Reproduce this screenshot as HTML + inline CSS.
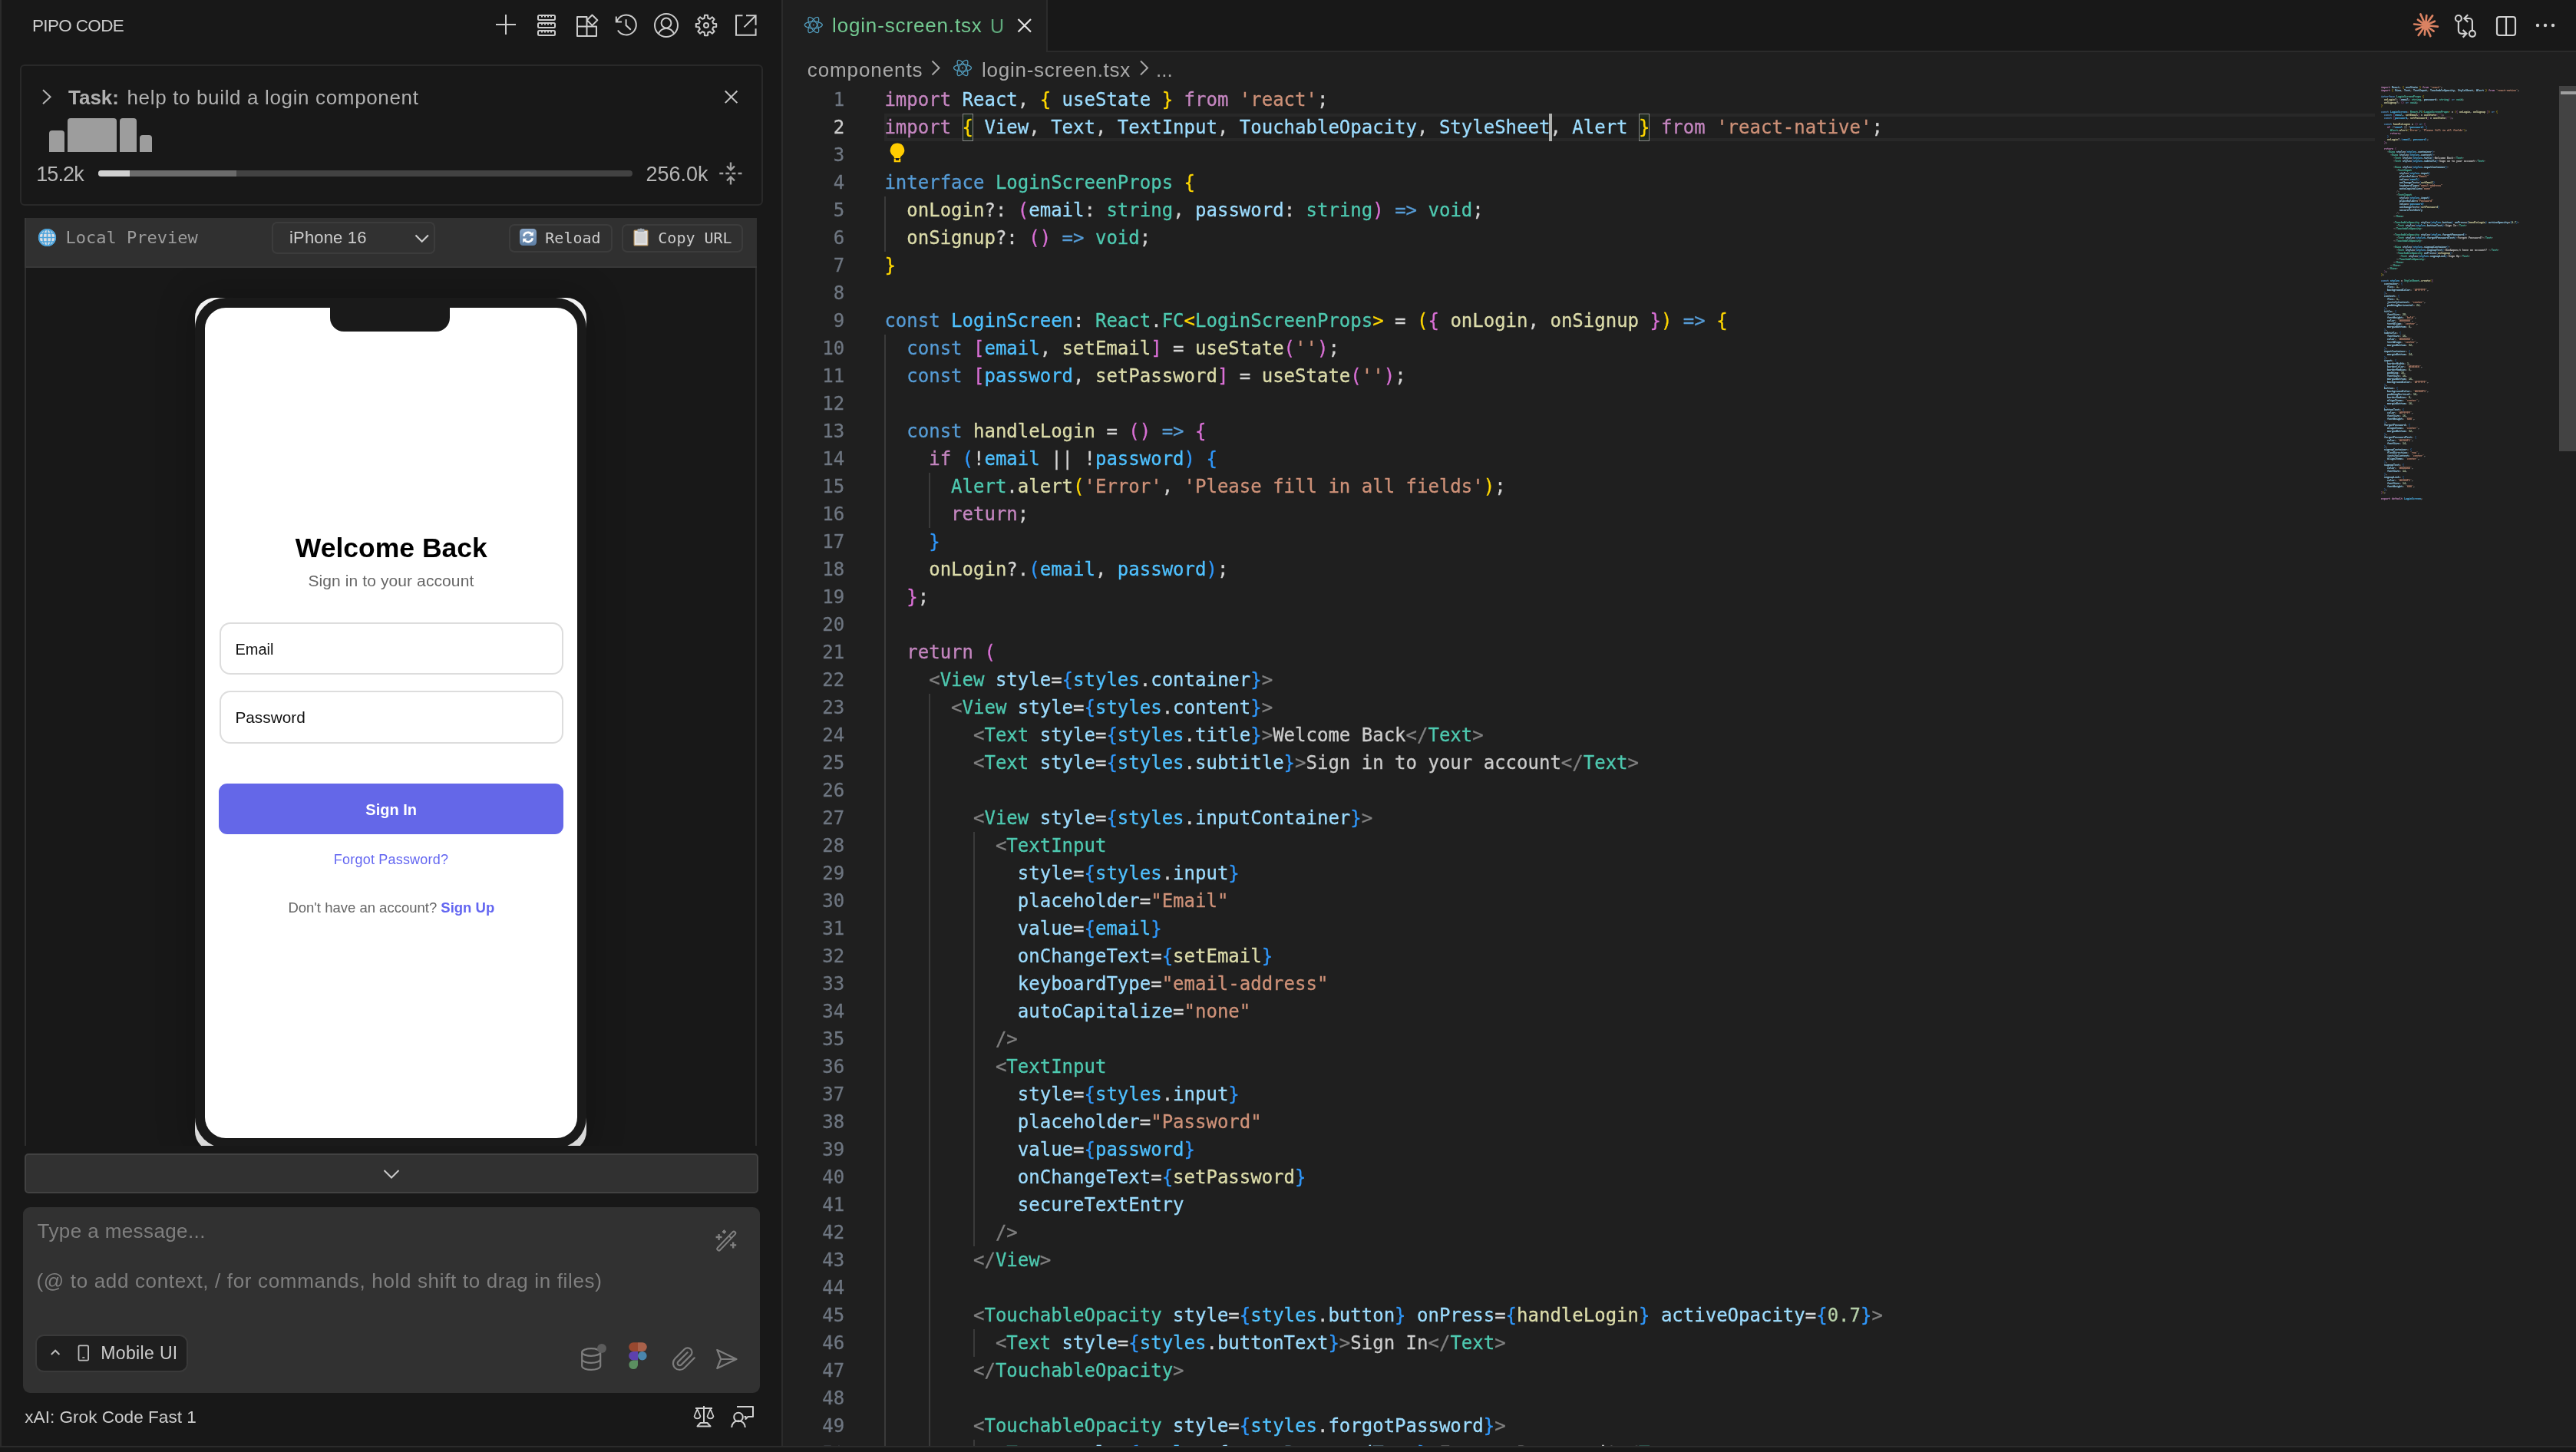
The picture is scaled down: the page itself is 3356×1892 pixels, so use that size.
<!DOCTYPE html>
<html lang="en"><head><meta charset="utf-8"><title>login-screen.tsx</title>
<style>
*{box-sizing:border-box}
html,body{margin:0;padding:0}
html{width:3356px;height:1892px;overflow:hidden;background:#1f1f1f}
body{width:3356px;height:1892px;overflow:hidden;background:#1f1f1f;position:relative;font-family:"Liberation Sans",sans-serif;color:#ccc}
#w{position:absolute;left:0;top:0;width:3356px;height:1892px;overflow:hidden;will-change:transform}
.a{position:absolute}
.t{position:absolute;white-space:pre;line-height:40px;height:40px}
svg{position:absolute;overflow:visible}
.ic{fill:none;stroke:#ccc;stroke-width:2}
#code{position:absolute;left:1020px;top:112px;width:2074px;height:1772px;overflow:hidden;font-family:"DejaVu Sans Mono","Liberation Mono",monospace;font-size:24px;line-height:36px;color:#ccc;-webkit-text-stroke:0.3px}
.l{position:relative;height:36px;white-space:pre}
.ln{position:absolute;left:0;width:80.2px;text-align:right;color:#6e7681}
.ln.a{color:#ccc}
.c{position:absolute;left:132.4px;top:0}
.gd{position:absolute;top:0;width:2px;height:36px;background:#3a3a3a}
i{font-style:normal}
.k{color:#c586c0}.s{color:#569cd6}.y{color:#4ec9b0}.f{color:#dcdcaa}.v{color:#9cdcfe}.o{color:#4fc1ff}
.g{color:#ce9178}.n{color:#b5cea8}.p{color:#d4d4d4}.x{color:#808080}.j{color:#ccc}
.b0{color:#ffd700}.b1{color:#da70d6}.b2{color:#2f97fa}
#mm{position:absolute;left:3102px;top:112px;width:1734px;transform-origin:0 0;transform:scale(0.13841,0.11111);font-family:"DejaVu Sans Mono","Liberation Mono",monospace;font-size:24px;line-height:36px;white-space:pre;font-weight:bold;color:#ccc}
#mm div{height:36px}
#mm .b0,#mm .b1,#mm .b2{opacity:.7}
</style></head>
<body>
<div id=w>
<div class=a style="left:1020px;top:0;width:2336px;height:68px;background:#181818;border-bottom:2px solid #2b2b2b"></div>
<div class=a style="left:1020px;top:0;width:345px;height:68px;background:#1f1f1f;border-right:2px solid #2b2b2b"></div>
<svg style="left:0;top:0" width="3356" height="112"><g transform="translate(1059.800 32.500)"><g fill="none" stroke="#519aba" stroke-width="1.250"><ellipse rx="11.500" ry="4.400"/><ellipse rx="11.500" ry="4.400" transform="rotate(60)"/><ellipse rx="11.500" ry="4.400" transform="rotate(120)"/></g><circle r="1.100" fill="#519aba" opacity=".8"/></g><g transform="translate(1254 88.500)"><g fill="none" stroke="#519aba" stroke-width="1.250"><ellipse rx="11.500" ry="4.400"/><ellipse rx="11.500" ry="4.400" transform="rotate(60)"/><ellipse rx="11.500" ry="4.400" transform="rotate(120)"/></g><circle r="1.100" fill="#519aba" opacity=".8"/></g><g fill="none" stroke="#e4e4e4" stroke-width="2.200"><path d="M1326.500 25l16.500 16.500M1343 25l-16.500 16.500"/></g><g fill="none" stroke="#a9a9a9" stroke-width="2"><path d="M1214.500 79.500l9 9-9 9M1486 79.500l9 9-9 9"/></g></svg>
<div class=t style="top:13.2px;font-size:26px;color:#73c991;left:1084.0px;letter-spacing:0.85px;">login-screen.tsx</div>
<div class=t style="top:13.5px;font-size:25px;color:#5fa97c;left:1290.0px;">U</div>
<div class=t style="top:70.9px;font-size:26px;color:#a9a9a9;left:1051.8px;letter-spacing:0.9px;">components</div>
<div class=t style="top:70.9px;font-size:26px;color:#a9a9a9;left:1279.0px;letter-spacing:0.75px;">login-screen.tsx</div>
<div class=t style="top:70.9px;font-size:26px;color:#a9a9a9;left:1506.0px;">...</div>
<svg style="left:0;top:0" width="3356" height="68" fill="none"><path d="M3160 33L3175.9 34.6M3160 33L3170.6 40.6M3160 33L3166.4 47.1M3160 33L3158.8 45.4M3160 33L3150.7 46.0M3160 33L3147.7 38.5M3160 33L3145.1 31.5M3160 33L3149.9 25.7M3160 33L3153.4 18.4M3160 33L3161.3 20.1M3160 33L3169.1 20.4M3160 33L3171.9 27.7" stroke="#da8262" stroke-width="2.700" stroke-linecap="round"/><circle cx="3160" cy="33" r="3.600" fill="#da8262"/><g stroke="#d0d0d0" stroke-width="2.200"><circle cx="3202.900" cy="24" r="4"/><circle cx="3220.900" cy="43.800" r="4"/><path d="M3202.900 28v11.800a4 4 0 0 0 4 4h6M3208.600 39l4.800 4.800-4.800 4.800M3220.900 39.800V28a4 4 0 0 0-4-4h-6M3215.200 19.200l-4.800 4.800 4.800 4.800"/><rect x="3253" y="22" width="24" height="24" rx="3"/><path d="M3265 22v24"/></g><g fill="#d0d0d0"><circle cx="3306" cy="33" r="2.200"/><circle cx="3316" cy="33" r="2.200"/><circle cx="3326" cy="33" r="2.200"/></g></svg>
<div class=a style="left:1152px;top:148px;width:1942px;height:36px;border:4px solid #282828;border-right:0"></div>
<div class=a style="left:1253.8px;top:148px;width:14px;height:36px;border:1px solid #888;background:rgba(0,100,0,0.1)"></div>
<div class=a style="left:2135.2px;top:148px;width:14px;height:36px;border:1px solid #888;background:rgba(0,100,0,0.1)"></div>
<div class=a style="left:2018px;top:148px;width:4px;height:36px;background:#aeafad"></div>
<div id=code><div class=l><span class="ln">1</span><span class=c><i class=k>import </i><i class=v>React</i><i class=p>, </i><i class=b0>{ </i><i class=v>useState </i><i class=b0>} </i><i class=k>from </i><i class=g>'react'</i><i class=p>;</i></span></div>
<div class=l><span class="ln a">2</span><span class=c><i class=k>import </i><i class=b0>{ </i><i class=v>View</i><i class=p>, </i><i class=v>Text</i><i class=p>, </i><i class=v>TextInput</i><i class=p>, </i><i class=v>TouchableOpacity</i><i class=p>, </i><i class=v>StyleSheet</i><i class=p>, </i><i class=v>Alert </i><i class=b0>} </i><i class=k>from </i><i class=g>'react-native'</i><i class=p>;</i></span></div>
<div class=l><span class="ln">3</span><span class=c></span></div>
<div class=l><span class="ln">4</span><span class=c><i class=s>interface </i><i class=y>LoginScreenProps </i><i class=b0>{</i></span></div>
<div class=l><span class="ln">5</span><b class=gd style="left:132.0px"></b><span class=c>  <i class=f>onLogin</i><i class=p>?: </i><i class=b1>(</i><i class=v>email</i><i class=p>: </i><i class=y>string</i><i class=p>, </i><i class=v>password</i><i class=p>: </i><i class=y>string</i><i class=b1>) </i><i class=s>=&gt; </i><i class=y>void</i><i class=p>;</i></span></div>
<div class=l><span class="ln">6</span><b class=gd style="left:132.0px"></b><span class=c>  <i class=f>onSignup</i><i class=p>?: </i><i class=b1>() </i><i class=s>=&gt; </i><i class=y>void</i><i class=p>;</i></span></div>
<div class=l><span class="ln">7</span><span class=c><i class=b0>}</i></span></div>
<div class=l><span class="ln">8</span><span class=c></span></div>
<div class=l><span class="ln">9</span><span class=c><i class=s>const </i><i class=o>LoginScreen</i><i class=p>: </i><i class=y>React</i><i class=p>.</i><i class=y>FC</i><i class=b0>&lt;</i><i class=y>LoginScreenProps</i><i class=b0>&gt; </i><i class=p>= </i><i class=b0>(</i><i class=b1>{ </i><i class=f>onLogin</i><i class=p>, </i><i class=f>onSignup </i><i class=b1>}</i><i class=b0>) </i><i class=s>=&gt; </i><i class=b0>{</i></span></div>
<div class=l><span class="ln">10</span><b class=gd style="left:132.0px"></b><span class=c>  <i class=s>const </i><i class=b1>[</i><i class=o>email</i><i class=p>, </i><i class=f>setEmail</i><i class=b1>] </i><i class=p>= </i><i class=f>useState</i><i class=b1>(</i><i class=g>''</i><i class=b1>)</i><i class=p>;</i></span></div>
<div class=l><span class="ln">11</span><b class=gd style="left:132.0px"></b><span class=c>  <i class=s>const </i><i class=b1>[</i><i class=o>password</i><i class=p>, </i><i class=f>setPassword</i><i class=b1>] </i><i class=p>= </i><i class=f>useState</i><i class=b1>(</i><i class=g>''</i><i class=b1>)</i><i class=p>;</i></span></div>
<div class=l><span class="ln">12</span><b class=gd style="left:132.0px"></b><span class=c></span></div>
<div class=l><span class="ln">13</span><b class=gd style="left:132.0px"></b><span class=c>  <i class=s>const </i><i class=f>handleLogin </i><i class=p>= </i><i class=b1>() </i><i class=s>=&gt; </i><i class=b1>{</i></span></div>
<div class=l><span class="ln">14</span><b class=gd style="left:132.0px"></b><span class=c>    <i class=k>if </i><i class=b2>(</i><i class=p>!</i><i class=o>email </i><i class=p>|| !</i><i class=o>password</i><i class=b2>) {</i></span></div>
<div class=l><span class="ln">15</span><b class=gd style="left:132.0px"></b><b class=gd style="left:189.8px"></b><span class=c>      <i class=y>Alert</i><i class=p>.</i><i class=f>alert</i><i class=b0>(</i><i class=g>'Error'</i><i class=p>, </i><i class=g>'Please fill in all fields'</i><i class=b0>)</i><i class=p>;</i></span></div>
<div class=l><span class="ln">16</span><b class=gd style="left:132.0px"></b><b class=gd style="left:189.8px"></b><span class=c>      <i class=k>return</i><i class=p>;</i></span></div>
<div class=l><span class="ln">17</span><b class=gd style="left:132.0px"></b><span class=c>    <i class=b2>}</i></span></div>
<div class=l><span class="ln">18</span><b class=gd style="left:132.0px"></b><span class=c>    <i class=f>onLogin</i><i class=p>?.</i><i class=b2>(</i><i class=o>email</i><i class=p>, </i><i class=o>password</i><i class=b2>)</i><i class=p>;</i></span></div>
<div class=l><span class="ln">19</span><b class=gd style="left:132.0px"></b><span class=c>  <i class=b1>}</i><i class=p>;</i></span></div>
<div class=l><span class="ln">20</span><b class=gd style="left:132.0px"></b><span class=c></span></div>
<div class=l><span class="ln">21</span><b class=gd style="left:132.0px"></b><span class=c>  <i class=k>return </i><i class=b1>(</i></span></div>
<div class=l><span class="ln">22</span><b class=gd style="left:132.0px"></b><span class=c>    <i class=x>&lt;</i><i class=y>View </i><i class=v>style</i><i class=p>=</i><i class=b2>{</i><i class=o>styles</i><i class=p>.</i><i class=v>container</i><i class=b2>}</i><i class=x>&gt;</i></span></div>
<div class=l><span class="ln">23</span><b class=gd style="left:132.0px"></b><b class=gd style="left:189.8px"></b><span class=c>      <i class=x>&lt;</i><i class=y>View </i><i class=v>style</i><i class=p>=</i><i class=b2>{</i><i class=o>styles</i><i class=p>.</i><i class=v>content</i><i class=b2>}</i><i class=x>&gt;</i></span></div>
<div class=l><span class="ln">24</span><b class=gd style="left:132.0px"></b><b class=gd style="left:189.8px"></b><span class=c>        <i class=x>&lt;</i><i class=y>Text </i><i class=v>style</i><i class=p>=</i><i class=b2>{</i><i class=o>styles</i><i class=p>.</i><i class=v>title</i><i class=b2>}</i><i class=x>&gt;</i><i class=j>Welcome Back</i><i class=x>&lt;/</i><i class=y>Text</i><i class=x>&gt;</i></span></div>
<div class=l><span class="ln">25</span><b class=gd style="left:132.0px"></b><b class=gd style="left:189.8px"></b><span class=c>        <i class=x>&lt;</i><i class=y>Text </i><i class=v>style</i><i class=p>=</i><i class=b2>{</i><i class=o>styles</i><i class=p>.</i><i class=v>subtitle</i><i class=b2>}</i><i class=x>&gt;</i><i class=j>Sign in to your account</i><i class=x>&lt;/</i><i class=y>Text</i><i class=x>&gt;</i></span></div>
<div class=l><span class="ln">26</span><b class=gd style="left:132.0px"></b><b class=gd style="left:189.8px"></b><span class=c></span></div>
<div class=l><span class="ln">27</span><b class=gd style="left:132.0px"></b><b class=gd style="left:189.8px"></b><span class=c>        <i class=x>&lt;</i><i class=y>View </i><i class=v>style</i><i class=p>=</i><i class=b2>{</i><i class=o>styles</i><i class=p>.</i><i class=v>inputContainer</i><i class=b2>}</i><i class=x>&gt;</i></span></div>
<div class=l><span class="ln">28</span><b class=gd style="left:132.0px"></b><b class=gd style="left:189.8px"></b><b class=gd style="left:247.6px"></b><span class=c>          <i class=x>&lt;</i><i class=y>TextInput</i></span></div>
<div class=l><span class="ln">29</span><b class=gd style="left:132.0px"></b><b class=gd style="left:189.8px"></b><b class=gd style="left:247.6px"></b><span class=c>            <i class=v>style</i><i class=p>=</i><i class=b2>{</i><i class=o>styles</i><i class=p>.</i><i class=v>input</i><i class=b2>}</i></span></div>
<div class=l><span class="ln">30</span><b class=gd style="left:132.0px"></b><b class=gd style="left:189.8px"></b><b class=gd style="left:247.6px"></b><span class=c>            <i class=v>placeholder</i><i class=p>=</i><i class=g>"Email"</i></span></div>
<div class=l><span class="ln">31</span><b class=gd style="left:132.0px"></b><b class=gd style="left:189.8px"></b><b class=gd style="left:247.6px"></b><span class=c>            <i class=v>value</i><i class=p>=</i><i class=b2>{</i><i class=o>email</i><i class=b2>}</i></span></div>
<div class=l><span class="ln">32</span><b class=gd style="left:132.0px"></b><b class=gd style="left:189.8px"></b><b class=gd style="left:247.6px"></b><span class=c>            <i class=v>onChangeText</i><i class=p>=</i><i class=b2>{</i><i class=f>setEmail</i><i class=b2>}</i></span></div>
<div class=l><span class="ln">33</span><b class=gd style="left:132.0px"></b><b class=gd style="left:189.8px"></b><b class=gd style="left:247.6px"></b><span class=c>            <i class=v>keyboardType</i><i class=p>=</i><i class=g>"email-address"</i></span></div>
<div class=l><span class="ln">34</span><b class=gd style="left:132.0px"></b><b class=gd style="left:189.8px"></b><b class=gd style="left:247.6px"></b><span class=c>            <i class=v>autoCapitalize</i><i class=p>=</i><i class=g>"none"</i></span></div>
<div class=l><span class="ln">35</span><b class=gd style="left:132.0px"></b><b class=gd style="left:189.8px"></b><b class=gd style="left:247.6px"></b><span class=c>          <i class=x>/&gt;</i></span></div>
<div class=l><span class="ln">36</span><b class=gd style="left:132.0px"></b><b class=gd style="left:189.8px"></b><b class=gd style="left:247.6px"></b><span class=c>          <i class=x>&lt;</i><i class=y>TextInput</i></span></div>
<div class=l><span class="ln">37</span><b class=gd style="left:132.0px"></b><b class=gd style="left:189.8px"></b><b class=gd style="left:247.6px"></b><span class=c>            <i class=v>style</i><i class=p>=</i><i class=b2>{</i><i class=o>styles</i><i class=p>.</i><i class=v>input</i><i class=b2>}</i></span></div>
<div class=l><span class="ln">38</span><b class=gd style="left:132.0px"></b><b class=gd style="left:189.8px"></b><b class=gd style="left:247.6px"></b><span class=c>            <i class=v>placeholder</i><i class=p>=</i><i class=g>"Password"</i></span></div>
<div class=l><span class="ln">39</span><b class=gd style="left:132.0px"></b><b class=gd style="left:189.8px"></b><b class=gd style="left:247.6px"></b><span class=c>            <i class=v>value</i><i class=p>=</i><i class=b2>{</i><i class=o>password</i><i class=b2>}</i></span></div>
<div class=l><span class="ln">40</span><b class=gd style="left:132.0px"></b><b class=gd style="left:189.8px"></b><b class=gd style="left:247.6px"></b><span class=c>            <i class=v>onChangeText</i><i class=p>=</i><i class=b2>{</i><i class=f>setPassword</i><i class=b2>}</i></span></div>
<div class=l><span class="ln">41</span><b class=gd style="left:132.0px"></b><b class=gd style="left:189.8px"></b><b class=gd style="left:247.6px"></b><span class=c>            <i class=v>secureTextEntry</i></span></div>
<div class=l><span class="ln">42</span><b class=gd style="left:132.0px"></b><b class=gd style="left:189.8px"></b><b class=gd style="left:247.6px"></b><span class=c>          <i class=x>/&gt;</i></span></div>
<div class=l><span class="ln">43</span><b class=gd style="left:132.0px"></b><b class=gd style="left:189.8px"></b><span class=c>        <i class=x>&lt;/</i><i class=y>View</i><i class=x>&gt;</i></span></div>
<div class=l><span class="ln">44</span><b class=gd style="left:132.0px"></b><b class=gd style="left:189.8px"></b><span class=c></span></div>
<div class=l><span class="ln">45</span><b class=gd style="left:132.0px"></b><b class=gd style="left:189.8px"></b><span class=c>        <i class=x>&lt;</i><i class=y>TouchableOpacity </i><i class=v>style</i><i class=p>=</i><i class=b2>{</i><i class=o>styles</i><i class=p>.</i><i class=v>button</i><i class=b2>} </i><i class=v>onPress</i><i class=p>=</i><i class=b2>{</i><i class=f>handleLogin</i><i class=b2>} </i><i class=v>activeOpacity</i><i class=p>=</i><i class=b2>{</i><i class=n>0.7</i><i class=b2>}</i><i class=x>&gt;</i></span></div>
<div class=l><span class="ln">46</span><b class=gd style="left:132.0px"></b><b class=gd style="left:189.8px"></b><b class=gd style="left:247.6px"></b><span class=c>          <i class=x>&lt;</i><i class=y>Text </i><i class=v>style</i><i class=p>=</i><i class=b2>{</i><i class=o>styles</i><i class=p>.</i><i class=v>buttonText</i><i class=b2>}</i><i class=x>&gt;</i><i class=j>Sign In</i><i class=x>&lt;/</i><i class=y>Text</i><i class=x>&gt;</i></span></div>
<div class=l><span class="ln">47</span><b class=gd style="left:132.0px"></b><b class=gd style="left:189.8px"></b><span class=c>        <i class=x>&lt;/</i><i class=y>TouchableOpacity</i><i class=x>&gt;</i></span></div>
<div class=l><span class="ln">48</span><b class=gd style="left:132.0px"></b><b class=gd style="left:189.8px"></b><span class=c></span></div>
<div class=l><span class="ln">49</span><b class=gd style="left:132.0px"></b><b class=gd style="left:189.8px"></b><span class=c>        <i class=x>&lt;</i><i class=y>TouchableOpacity </i><i class=v>style</i><i class=p>=</i><i class=b2>{</i><i class=o>styles</i><i class=p>.</i><i class=v>forgotPassword</i><i class=b2>}</i><i class=x>&gt;</i></span></div>
<div class=l><span class="ln">50</span><b class=gd style="left:132.0px"></b><b class=gd style="left:189.8px"></b><b class=gd style="left:247.6px"></b><span class=c>          <i class=x>&lt;</i><i class=y>Text </i><i class=v>style</i><i class=p>=</i><i class=b2>{</i><i class=o>styles</i><i class=p>.</i><i class=v>forgotPasswordText</i><i class=b2>}</i><i class=x>&gt;</i><i class=j>Forgot Password?</i><i class=x>&lt;/</i><i class=y>Text</i><i class=x>&gt;</i></span></div></div>
<svg style="left:1158px;top:184.600px" width="22" height="28" viewBox="0 0 22 28"><path d="M11 1.500a9.200 9.200 0 0 0-5.600 16.500c1 .9 1.500 1.700 1.600 3h8c.1-1.300.6-2.100 1.600-3A9.200 9.200 0 0 0 11 1.500z" fill="#ffcc00"/><path d="M7.800 21.500v3.700h6.400v-3.700" fill="none" stroke="#ffcc00" stroke-width="2.200"/></svg>
<div id=mm><div><i class=k>import </i><i class=v>React</i><i class=p>, </i><i class=b0>{ </i><i class=v>useState </i><i class=b0>} </i><i class=k>from </i><i class=g>'react'</i><i class=p>;</i></div><div><i class=k>import </i><i class=b0>{ </i><i class=v>View</i><i class=p>, </i><i class=v>Text</i><i class=p>, </i><i class=v>TextInput</i><i class=p>, </i><i class=v>TouchableOpacity</i><i class=p>, </i><i class=v>StyleSheet</i><i class=p>, </i><i class=v>Alert </i><i class=b0>} </i><i class=k>from </i><i class=g>'react-native'</i><i class=p>;</i></div><div></div><div><i class=s>interface </i><i class=y>LoginScreenProps </i><i class=b0>{</i></div><div>  <i class=f>onLogin</i><i class=p>?: </i><i class=b1>(</i><i class=v>email</i><i class=p>: </i><i class=y>string</i><i class=p>, </i><i class=v>password</i><i class=p>: </i><i class=y>string</i><i class=b1>) </i><i class=s>=&gt; </i><i class=y>void</i><i class=p>;</i></div><div>  <i class=f>onSignup</i><i class=p>?: </i><i class=b1>() </i><i class=s>=&gt; </i><i class=y>void</i><i class=p>;</i></div><div><i class=b0>}</i></div><div></div><div><i class=s>const </i><i class=o>LoginScreen</i><i class=p>: </i><i class=y>React</i><i class=p>.</i><i class=y>FC</i><i class=b0>&lt;</i><i class=y>LoginScreenProps</i><i class=b0>&gt; </i><i class=p>= </i><i class=b0>(</i><i class=b1>{ </i><i class=f>onLogin</i><i class=p>, </i><i class=f>onSignup </i><i class=b1>}</i><i class=b0>) </i><i class=s>=&gt; </i><i class=b0>{</i></div><div>  <i class=s>const </i><i class=b1>[</i><i class=o>email</i><i class=p>, </i><i class=f>setEmail</i><i class=b1>] </i><i class=p>= </i><i class=f>useState</i><i class=b1>(</i><i class=g>''</i><i class=b1>)</i><i class=p>;</i></div><div>  <i class=s>const </i><i class=b1>[</i><i class=o>password</i><i class=p>, </i><i class=f>setPassword</i><i class=b1>] </i><i class=p>= </i><i class=f>useState</i><i class=b1>(</i><i class=g>''</i><i class=b1>)</i><i class=p>;</i></div><div></div><div>  <i class=s>const </i><i class=f>handleLogin </i><i class=p>= </i><i class=b1>() </i><i class=s>=&gt; </i><i class=b1>{</i></div><div>    <i class=k>if </i><i class=b2>(</i><i class=p>!</i><i class=o>email </i><i class=p>|| !</i><i class=o>password</i><i class=b2>) {</i></div><div>      <i class=y>Alert</i><i class=p>.</i><i class=f>alert</i><i class=b0>(</i><i class=g>'Error'</i><i class=p>, </i><i class=g>'Please fill in all fields'</i><i class=b0>)</i><i class=p>;</i></div><div>      <i class=k>return</i><i class=p>;</i></div><div>    <i class=b2>}</i></div><div>    <i class=f>onLogin</i><i class=p>?.</i><i class=b2>(</i><i class=o>email</i><i class=p>, </i><i class=o>password</i><i class=b2>)</i><i class=p>;</i></div><div>  <i class=b1>}</i><i class=p>;</i></div><div></div><div>  <i class=k>return </i><i class=b1>(</i></div><div>    <i class=x>&lt;</i><i class=y>View </i><i class=v>style</i><i class=p>=</i><i class=b2>{</i><i class=o>styles</i><i class=p>.</i><i class=v>container</i><i class=b2>}</i><i class=x>&gt;</i></div><div>      <i class=x>&lt;</i><i class=y>View </i><i class=v>style</i><i class=p>=</i><i class=b2>{</i><i class=o>styles</i><i class=p>.</i><i class=v>content</i><i class=b2>}</i><i class=x>&gt;</i></div><div>        <i class=x>&lt;</i><i class=y>Text </i><i class=v>style</i><i class=p>=</i><i class=b2>{</i><i class=o>styles</i><i class=p>.</i><i class=v>title</i><i class=b2>}</i><i class=x>&gt;</i><i class=j>Welcome Back</i><i class=x>&lt;/</i><i class=y>Text</i><i class=x>&gt;</i></div><div>        <i class=x>&lt;</i><i class=y>Text </i><i class=v>style</i><i class=p>=</i><i class=b2>{</i><i class=o>styles</i><i class=p>.</i><i class=v>subtitle</i><i class=b2>}</i><i class=x>&gt;</i><i class=j>Sign in to your account</i><i class=x>&lt;/</i><i class=y>Text</i><i class=x>&gt;</i></div><div></div><div>        <i class=x>&lt;</i><i class=y>View </i><i class=v>style</i><i class=p>=</i><i class=b2>{</i><i class=o>styles</i><i class=p>.</i><i class=v>inputContainer</i><i class=b2>}</i><i class=x>&gt;</i></div><div>          <i class=x>&lt;</i><i class=y>TextInput</i></div><div>            <i class=v>style</i><i class=p>=</i><i class=b2>{</i><i class=o>styles</i><i class=p>.</i><i class=v>input</i><i class=b2>}</i></div><div>            <i class=v>placeholder</i><i class=p>=</i><i class=g>"Email"</i></div><div>            <i class=v>value</i><i class=p>=</i><i class=b2>{</i><i class=o>email</i><i class=b2>}</i></div><div>            <i class=v>onChangeText</i><i class=p>=</i><i class=b2>{</i><i class=f>setEmail</i><i class=b2>}</i></div><div>            <i class=v>keyboardType</i><i class=p>=</i><i class=g>"email-address"</i></div><div>            <i class=v>autoCapitalize</i><i class=p>=</i><i class=g>"none"</i></div><div>          <i class=x>/&gt;</i></div><div>          <i class=x>&lt;</i><i class=y>TextInput</i></div><div>            <i class=v>style</i><i class=p>=</i><i class=b2>{</i><i class=o>styles</i><i class=p>.</i><i class=v>input</i><i class=b2>}</i></div><div>            <i class=v>placeholder</i><i class=p>=</i><i class=g>"Password"</i></div><div>            <i class=v>value</i><i class=p>=</i><i class=b2>{</i><i class=o>password</i><i class=b2>}</i></div><div>            <i class=v>onChangeText</i><i class=p>=</i><i class=b2>{</i><i class=f>setPassword</i><i class=b2>}</i></div><div>            <i class=v>secureTextEntry</i></div><div>          <i class=x>/&gt;</i></div><div>        <i class=x>&lt;/</i><i class=y>View</i><i class=x>&gt;</i></div><div></div><div>        <i class=x>&lt;</i><i class=y>TouchableOpacity </i><i class=v>style</i><i class=p>=</i><i class=b2>{</i><i class=o>styles</i><i class=p>.</i><i class=v>button</i><i class=b2>} </i><i class=v>onPress</i><i class=p>=</i><i class=b2>{</i><i class=f>handleLogin</i><i class=b2>} </i><i class=v>activeOpacity</i><i class=p>=</i><i class=b2>{</i><i class=n>0.7</i><i class=b2>}</i><i class=x>&gt;</i></div><div>          <i class=x>&lt;</i><i class=y>Text </i><i class=v>style</i><i class=p>=</i><i class=b2>{</i><i class=o>styles</i><i class=p>.</i><i class=v>buttonText</i><i class=b2>}</i><i class=x>&gt;</i><i class=j>Sign In</i><i class=x>&lt;/</i><i class=y>Text</i><i class=x>&gt;</i></div><div>        <i class=x>&lt;/</i><i class=y>TouchableOpacity</i><i class=x>&gt;</i></div><div></div><div>        <i class=x>&lt;</i><i class=y>TouchableOpacity </i><i class=v>style</i><i class=p>=</i><i class=b2>{</i><i class=o>styles</i><i class=p>.</i><i class=v>forgotPassword</i><i class=b2>}</i><i class=x>&gt;</i></div><div>          <i class=x>&lt;</i><i class=y>Text </i><i class=v>style</i><i class=p>=</i><i class=b2>{</i><i class=o>styles</i><i class=p>.</i><i class=v>forgotPasswordText</i><i class=b2>}</i><i class=x>&gt;</i><i class=j>Forgot Password?</i><i class=x>&lt;/</i><i class=y>Text</i><i class=x>&gt;</i></div><div>        <i class=x>&lt;/</i><i class=y>TouchableOpacity</i><i class=x>&gt;</i></div><div></div><div>        <i class=x>&lt;</i><i class=y>View </i><i class=v>style</i><i class=p>=</i><i class=b2>{</i><i class=o>styles</i><i class=p>.</i><i class=v>signupContainer</i><i class=b2>}</i><i class=x>&gt;</i></div><div>          <i class=x>&lt;</i><i class=y>Text </i><i class=v>style</i><i class=p>=</i><i class=b2>{</i><i class=o>styles</i><i class=p>.</i><i class=v>signupText</i><i class=b2>}</i><i class=x>&gt;</i><i class=j>Don&amp;apos;t have an account? </i><i class=x>&lt;/</i><i class=y>Text</i><i class=x>&gt;</i></div><div>          <i class=x>&lt;</i><i class=y>TouchableOpacity </i><i class=v>onPress</i><i class=p>=</i><i class=b2>{</i><i class=f>onSignup</i><i class=b2>}</i><i class=x>&gt;</i></div><div>            <i class=x>&lt;</i><i class=y>Text </i><i class=v>style</i><i class=p>=</i><i class=b2>{</i><i class=o>styles</i><i class=p>.</i><i class=v>signupLink</i><i class=b2>}</i><i class=x>&gt;</i><i class=j>Sign Up</i><i class=x>&lt;/</i><i class=y>Text</i><i class=x>&gt;</i></div><div>          <i class=x>&lt;/</i><i class=y>TouchableOpacity</i><i class=x>&gt;</i></div><div>        <i class=x>&lt;/</i><i class=y>View</i><i class=x>&gt;</i></div><div>      <i class=x>&lt;/</i><i class=y>View</i><i class=x>&gt;</i></div><div>    <i class=x>&lt;/</i><i class=y>View</i><i class=x>&gt;</i></div><div>  <i class=b1>)</i><i class=p>;</i></div><div><i class=b0>}</i><i class=p>;</i></div><div></div><div><i class=s>const </i><i class=o>styles </i><i class=p>= </i><i class=y>StyleSheet</i><i class=p>.</i><i class=f>create</i><i class=b0>(</i><i class=b1>{</i></div><div>  <i class=v>container</i><i class=p>: </i><i class=b2>{</i></div><div>    <i class=v>flex</i><i class=p>: </i><i class=n>1</i><i class=p>,</i></div><div>    <i class=v>backgroundColor</i><i class=p>: </i><i class=g>'#FFFFFF'</i><i class=p>,</i></div><div>  <i class=b2>}</i><i class=p>,</i></div><div>  <i class=v>content</i><i class=p>: </i><i class=b2>{</i></div><div>    <i class=v>flex</i><i class=p>: </i><i class=n>1</i><i class=p>,</i></div><div>    <i class=v>justifyContent</i><i class=p>: </i><i class=g>'center'</i><i class=p>,</i></div><div>    <i class=v>paddingHorizontal</i><i class=p>: </i><i class=n>24</i><i class=p>,</i></div><div>  <i class=b2>}</i><i class=p>,</i></div><div>  <i class=v>title</i><i class=p>: </i><i class=b2>{</i></div><div>    <i class=v>fontSize</i><i class=p>: </i><i class=n>28</i><i class=p>,</i></div><div>    <i class=v>fontWeight</i><i class=p>: </i><i class=g>'bold'</i><i class=p>,</i></div><div>    <i class=v>color</i><i class=p>: </i><i class=g>'#000000'</i><i class=p>,</i></div><div>    <i class=v>textAlign</i><i class=p>: </i><i class=g>'center'</i><i class=p>,</i></div><div>    <i class=v>marginBottom</i><i class=p>: </i><i class=n>8</i><i class=p>,</i></div><div>  <i class=b2>}</i><i class=p>,</i></div><div>  <i class=v>subtitle</i><i class=p>: </i><i class=b2>{</i></div><div>    <i class=v>fontSize</i><i class=p>: </i><i class=n>16</i><i class=p>,</i></div><div>    <i class=v>color</i><i class=p>: </i><i class=g>'#666666'</i><i class=p>,</i></div><div>    <i class=v>textAlign</i><i class=p>: </i><i class=g>'center'</i><i class=p>,</i></div><div>    <i class=v>marginBottom</i><i class=p>: </i><i class=n>32</i><i class=p>,</i></div><div>  <i class=b2>}</i><i class=p>,</i></div><div>  <i class=v>inputContainer</i><i class=p>: </i><i class=b2>{</i></div><div>    <i class=v>marginBottom</i><i class=p>: </i><i class=n>24</i><i class=p>,</i></div><div>  <i class=b2>}</i><i class=p>,</i></div><div>  <i class=v>input</i><i class=p>: </i><i class=b2>{</i></div><div>    <i class=v>borderWidth</i><i class=p>: </i><i class=n>1</i><i class=p>,</i></div><div>    <i class=v>borderColor</i><i class=p>: </i><i class=g>'#E0E0E0'</i><i class=p>,</i></div><div>    <i class=v>borderRadius</i><i class=p>: </i><i class=n>8</i><i class=p>,</i></div><div>    <i class=v>padding</i><i class=p>: </i><i class=n>16</i><i class=p>,</i></div><div>    <i class=v>fontSize</i><i class=p>: </i><i class=n>16</i><i class=p>,</i></div><div>    <i class=v>marginBottom</i><i class=p>: </i><i class=n>16</i><i class=p>,</i></div><div>    <i class=v>backgroundColor</i><i class=p>: </i><i class=g>'#FFFFFF'</i><i class=p>,</i></div><div>  <i class=b2>}</i><i class=p>,</i></div><div>  <i class=v>button</i><i class=p>: </i><i class=b2>{</i></div><div>    <i class=v>backgroundColor</i><i class=p>: </i><i class=g>'#6366F1'</i><i class=p>,</i></div><div>    <i class=v>paddingVertical</i><i class=p>: </i><i class=n>16</i><i class=p>,</i></div><div>    <i class=v>borderRadius</i><i class=p>: </i><i class=n>8</i><i class=p>,</i></div><div>    <i class=v>alignItems</i><i class=p>: </i><i class=g>'center'</i><i class=p>,</i></div><div>    <i class=v>marginBottom</i><i class=p>: </i><i class=n>16</i><i class=p>,</i></div><div>  <i class=b2>}</i><i class=p>,</i></div><div>  <i class=v>buttonText</i><i class=p>: </i><i class=b2>{</i></div><div>    <i class=v>color</i><i class=p>: </i><i class=g>'#FFFFFF'</i><i class=p>,</i></div><div>    <i class=v>fontSize</i><i class=p>: </i><i class=n>16</i><i class=p>,</i></div><div>    <i class=v>fontWeight</i><i class=p>: </i><i class=g>'600'</i><i class=p>,</i></div><div>  <i class=b2>}</i><i class=p>,</i></div><div>  <i class=v>forgotPassword</i><i class=p>: </i><i class=b2>{</i></div><div>    <i class=v>alignItems</i><i class=p>: </i><i class=g>'center'</i><i class=p>,</i></div><div>    <i class=v>marginBottom</i><i class=p>: </i><i class=n>32</i><i class=p>,</i></div><div>  <i class=b2>}</i><i class=p>,</i></div><div>  <i class=v>forgotPasswordText</i><i class=p>: </i><i class=b2>{</i></div><div>    <i class=v>color</i><i class=p>: </i><i class=g>'#6366F1'</i><i class=p>,</i></div><div>    <i class=v>fontSize</i><i class=p>: </i><i class=n>14</i><i class=p>,</i></div><div>  <i class=b2>}</i><i class=p>,</i></div><div>  <i class=v>signupContainer</i><i class=p>: </i><i class=b2>{</i></div><div>    <i class=v>flexDirection</i><i class=p>: </i><i class=g>'row'</i><i class=p>,</i></div><div>    <i class=v>justifyContent</i><i class=p>: </i><i class=g>'center'</i><i class=p>,</i></div><div>    <i class=v>alignItems</i><i class=p>: </i><i class=g>'center'</i><i class=p>,</i></div><div>  <i class=b2>}</i><i class=p>,</i></div><div>  <i class=v>signupText</i><i class=p>: </i><i class=b2>{</i></div><div>    <i class=v>color</i><i class=p>: </i><i class=g>'#666666'</i><i class=p>,</i></div><div>    <i class=v>fontSize</i><i class=p>: </i><i class=n>14</i><i class=p>,</i></div><div>  <i class=b2>}</i><i class=p>,</i></div><div>  <i class=v>signupLink</i><i class=p>: </i><i class=b2>{</i></div><div>    <i class=v>color</i><i class=p>: </i><i class=g>'#6366F1'</i><i class=p>,</i></div><div>    <i class=v>fontSize</i><i class=p>: </i><i class=n>14</i><i class=p>,</i></div><div>    <i class=v>fontWeight</i><i class=p>: </i><i class=g>'600'</i><i class=p>,</i></div><div>  <i class=b2>}</i><i class=p>,</i></div><div><i class=b1>}</i><i class=b0>)</i><i class=p>;</i></div><div></div><div><i class=k>export default </i><i class=o>LoginScreen</i><i class=p>;</i></div></div>
<div class=a style="left:3334px;top:112px;width:22px;height:476px;background:#434343"></div>
<div class=a style="left:3336px;top:119px;width:20px;height:4px;background:#a0a0a0"></div>
<div class=a style="left:0;top:0;width:1020px;height:1884px;background:#181818;border-left:2px solid #2b2b2b;border-right:2px solid #2b2b2b"></div>
<div class=t style="top:13.7px;font-size:22.5px;color:#ccc;left:42.0px;letter-spacing:-0.65px;">PIPO CODE</div>
<svg class=ic style="left:0;top:0" width="1020" height="68" viewBox="0 0 1020 68">
<path d="M646 32h26M659 19v26"/>
<g id="srv"><rect x="701" y="20" width="22" height="6" rx="1.5"/><rect x="701" y="30" width="22" height="6" rx="1.5"/><rect x="701" y="40" width="22" height="6" rx="1.5"/>
<path d="M705 21.500h14M705 31.500h14M705 41.500h14" stroke-dasharray="2 2" stroke-width="2.200"/></g>
<path d="M752 22h12.500v25H752zM752 34.500h25V47H764.500M771.500 19.500l6.800 6.800-6.800 6.800-6.800-6.800z" stroke-linejoin="round"/>
<path d="M802.800 21.500v7h7.200M803.600 28a13 13 0 1 1 1.300 11.500M815.600 25.200V33l6.200 5.800"/>
<circle cx="868" cy="33" r="15"/><circle cx="868" cy="30" r="6.400"/><path d="M858 44.200a10.500 10.500 0 0 1 20 0"/>
<path d="M917.7 23.7L918.0 19.8L922.0 19.8L922.3 23.7L925.0 24.8L927.9 22.3L930.7 25.1L928.2 28.0L929.3 30.7L933.2 31.0L933.2 35.0L929.3 35.3L928.2 38.0L930.7 40.9L927.9 43.7L925.0 41.2L922.3 42.3L922.0 46.2L918.0 46.2L917.7 42.3L915.0 41.2L912.1 43.7L909.3 40.9L911.8 38.0L910.7 35.3L906.8 35.0L906.8 31.0L910.7 30.7L911.8 28.0L909.3 25.1L912.1 22.3L915.0 24.8Z" stroke-linejoin="round"/>
<circle cx="920" cy="33" r="3"/>
<path d="M967.500 20.300H959v25.400h25.600V37.300M972 20.300h12.600v12.400M984.600 20.300L969.500 35.400"/>
</svg>
<div class=a style="left:26px;top:84px;width:968px;height:184px;border:2px solid #292929;border-radius:6px"></div>
<svg class=ic style="left:0;top:0" width="1020" height="280"><path d="M56 117.300l9.600 9-9.600 9" stroke-width="2" stroke="#b4b4b4"/><path d="M944.800 118.500l15.600 15.600M960.400 118.500l-15.600 15.600" stroke-width="2" stroke="#c4c4c4"/><g stroke="#a0a0a0"><path d="M937.300 226h5M945.300 226h5M953.400 226h5M961.500 226h5" stroke-width="2.400"/><path d="M952 211.500v9.500M947 216.500l5 5 5-5M952 240.500v-9.500M947 235.500l5-5 5 5" stroke-width="2.400"/></g></svg>
<div class=t style="top:106.5px;font-size:26px;color:#b0b0b0;left:89.0px;font-weight:700;">Task:</div>
<div class=t style="top:106.5px;font-size:26px;color:#b0b0b0;left:165.5px;letter-spacing:0.65px;">help to build a login component</div>
<div class=a style="left:64px;top:170px;width:20px;height:28px;background:#9d9d9d;border-radius:4px 4px 0 0"></div>
<div class=a style="left:88px;top:154px;width:64px;height:44px;background:#9d9d9d;border-radius:4px 4px 0 0"></div>
<div class=a style="left:156px;top:154px;width:22px;height:44px;background:#9d9d9d;border-radius:4px 4px 0 0"></div>
<div class=a style="left:182px;top:176px;width:16px;height:22px;background:#9d9d9d;border-radius:4px 4px 0 0"></div>
<div class=t style="top:207.0px;font-size:27px;color:#b6b6b6;left:47.2px;letter-spacing:-0.9px;">15.2k</div>
<div class=a style="left:128px;top:222px;width:696px;height:8px;border-radius:4px;background:#424242;overflow:hidden"><div class=a style="left:0;top:0;width:180px;height:8px;background:#6b6b6b"></div><div class=a style="left:0;top:0;width:41px;height:8px;background:#d0d0d0"></div></div>
<div class=t style="top:207.0px;font-size:27px;color:#b6b6b6;left:841.5px;">256.0k</div>
<div class=a style="left:32px;top:284px;width:954px;height:65px;background:#303030;border-left:2px solid #383838;border-bottom:2px solid #383838"></div>
<div class=a style="left:32px;top:349px;width:954px;height:1144px;border-left:2px solid #2e2e2e;border-right:2px solid #2e2e2e;overflow:hidden" id="pv"><div class=a style="left:219.5px;top:39px;width:510.5px;height:1112px;background:linear-gradient(#f2f2f2,#d9d9d9);border-radius:26px;box-shadow:0 0 46px 6px rgba(0,0,0,0.22)"></div>
<div class=a style="left:219.5px;top:39.45px;width:510.5px;height:1108px;background:#1a1a1a;border-radius:40px"></div>
<div class=a style="left:232.5px;top:52px;width:485px;height:1082px;background:#fff;border-radius:27px"></div>
<div class=a style="left:396px;top:51px;width:156px;height:32px;background:#1a1a1a;border-radius:0 0 18px 18px"></div>
<div class=t style="top:345.2px;font-size:35.5px;color:#000;left:-24.2px;width:1000px;text-align:center;font-weight:700;">Welcome Back</div>
<div class=t style="top:387.9px;font-size:21px;color:#666;left:-24.6px;width:1000px;text-align:center;letter-spacing:0.1px;">Sign in to your account</div>
<div class=a style="left:251.5px;top:462px;width:448px;height:68px;border:2px solid #ddd;border-radius:14px"></div>
<div class=a style="left:251.5px;top:551px;width:448px;height:68.500px;border:2px solid #ddd;border-radius:14px"></div>
<div class=t style="top:476.8px;font-size:20px;color:#111;left:272.4px;">Email</div>
<div class=t style="top:566.1px;font-size:20.8px;color:#111;left:272.4px;">Password</div>
<div class=a style="left:251px;top:672px;width:448.700px;height:66.300px;background:#6467e8;border-radius:11px"></div>
<div class=t style="top:686.1px;font-size:20px;color:#fff;left:-24.3px;width:1000px;text-align:center;font-weight:700;">Sign In</div>
<div class=t style="top:750.5px;font-size:18px;color:#6366f1;left:-24.5px;width:1000px;text-align:center;letter-spacing:0.2px;">Forgot Password?</div>
<div class=t style="top:813.8px;font-size:18.5px;color:#666;left:-24.2px;width:1000px;text-align:center;">Don&apos;t have an account? <b style="color:#6366f1">Sign Up</b></div></div>
<svg style="left:50px;top:298px" width="23" height="23" viewBox="0 0 23 23"><defs><clipPath id="gc"><circle cx="11.500" cy="11.500" r="11"/></clipPath></defs>
<circle cx="11.500" cy="11.500" r="11.300" fill="#dcdfe4"/><g clip-path="url(#gc)" fill="none" stroke="#4aa3dc" stroke-width="1.600"><path d="M0 11.500h23M1 6h21M1 17h21M11.500 0v23"/><ellipse cx="11.500" cy="11.500" rx="5.500" ry="11.300"/></g><circle cx="11.500" cy="11.500" r="10.700" fill="none" stroke="#4aa3dc" stroke-width="1.800"/></svg>
<div class=t style="top:290.0px;font-size:22px;color:#9d9d9d;left:85.6px;font-family:'DejaVu Sans Mono','Liberation Mono',monospace;">Local Preview</div>
<div class=a style="left:354px;top:289px;width:213px;height:42px;border:2px solid #3c3c3c;border-radius:7px;background:#313131"></div>
<div class=t style="top:290.0px;font-size:22px;color:#ccc;left:377.0px;letter-spacing:0.17px;">iPhone 16</div>
<svg class=ic style="left:0;top:280px" width="1020" height="70"><path d="M541.500 26.500l8.200 8.200 8.200-8.200" stroke-width="2.200"/></svg>
<div class=a style="left:663px;top:292px;width:135px;height:37px;border:2px solid #3c3c3c;border-radius:7px"></div>
<div class=a style="left:810px;top:292px;width:158px;height:37px;border:2px solid #3c3c3c;border-radius:7px"></div>
<svg style="left:677px;top:298px" width="22" height="22" viewBox="0 0 22 22"><defs><linearGradient id="rg" x1="0" y1="0" x2="0" y2="1"><stop offset="0" stop-color="#8aa7c9"/><stop offset="1" stop-color="#5c7da3"/></linearGradient></defs>
<rect x="0" y="0" width="22" height="22" rx="4.500" fill="url(#rg)"/><g fill="none" stroke="#fff" stroke-width="2.600"><path d="M5.200 9.800a6 6 0 0 1 10.300-3"/><path d="M16.800 12.200a6 6 0 0 1-10.300 3"/></g><path d="M17.800 3.800v5.400h-5.400zM4.200 18.200v-5.400h5.400z" fill="#fff"/></svg>
<div class=t style="top:289.8px;font-size:20px;color:#ccc;left:710.3px;font-family:'DejaVu Sans Mono','Liberation Mono',monospace;">Reload</div>
<svg style="left:825px;top:297px" width="20" height="24" viewBox="0 0 20 24"><rect x="0.500" y="2.500" width="19" height="21" rx="1.500" fill="#b18c55"/><rect x="1.600" y="3.800" width="16.800" height="18.600" fill="#e2e2e2"/><rect x="3.800" y="6.500" width="12.400" height="13.500" fill="#d2d2d2"/><rect x="5.500" y="1.200" width="9" height="4" rx="1" fill="#a3abb4"/><circle cx="10" cy="1.700" r="1.300" fill="#a3abb4"/></svg>
<div class=t style="top:289.8px;font-size:20px;color:#ccc;left:857.3px;font-family:'DejaVu Sans Mono','Liberation Mono',monospace;">Copy URL</div>
<div class=a style="left:32px;top:1503px;width:956px;height:52px;background:#313131;border:2px solid #424242;border-radius:5px"></div>
<svg class=ic style="left:0;top:1500px" width="1020" height="60"><path d="M500.500 25l9.500 9.500 9.500-9.500" stroke-width="2"/></svg>
<div class=a style="left:30px;top:1573px;width:960px;height:242px;background:#313131;border-radius:9px"></div>
<div class=t style="top:1584.0px;font-size:26px;color:#7f7f7f;left:48.6px;letter-spacing:0.4px;">Type a message...</div>
<div class=t style="top:1648.7px;font-size:26px;color:#7f7f7f;left:47.5px;letter-spacing:0.66px;">(@ to add context, / for commands, hold shift to drag in files)</div>
<svg style="left:0;top:1580px" width="1020" height="70" fill="none" stroke="#808080" stroke-width="2"><g transform="rotate(-46.300 946.300 37.100)"><rect x="930" y="34.900" width="32.600" height="4.400" rx="2.200"/><path d="M953.500 34.900v4.400"/></g>
<path d="M936.600 28v8M932.600 32h8M955.200 38.400v8M951.200 42.400h8" stroke-width="2.400"/><path d="M943.400 22.600l2.500 2.500-2.500 2.500-2.500-2.500z" fill="#808080" stroke-width="1"/></svg>
<div class=a style="left:46px;top:1739px;width:199px;height:49px;background:#1f1f1f;border:2px solid #3a3a3a;border-radius:11px"></div>
<svg style="left:0;top:1730px" width="1020" height="70" fill="none" stroke="#bdbdbd" stroke-width="2"><path d="M66.800 35l5.300-5.300 5.300 5.300"/><rect x="102.500" y="23.300" width="12.600" height="19.400" rx="1.500" stroke-width="1.800"/><path d="M107.300 39h3" stroke-width="1.600"/></svg>
<div class=t style="top:1743.2px;font-size:23px;color:#ccc;left:131.3px;letter-spacing:0.35px;">Mobile UI</div>
<svg style="left:0;top:1740px" width="1020" height="60" fill="none" stroke="#7d7d7d" stroke-width="2.200">
<g><ellipse cx="770.200" cy="22" rx="12" ry="4.800"/><path d="M758.200 22v18c0 2.700 5.400 4.800 12 4.800s12-2.100 12-4.800V22M758.200 31c0 2.700 5.400 4.800 12 4.800s12-2.100 12-4.800"/></g>
<circle cx="784" cy="17" r="6" fill="#5c5c5c" stroke="none"/>
<g stroke="none"><path d="M825 9.300h6v11.600h-6a5.800 5.800 0 0 1 0-11.600z" fill="#98482f"/><path d="M831 9.300h6a5.800 5.800 0 0 1 0 11.600h-6z" fill="#a9614a"/><path d="M825 20.900h6v11.600h-6a5.800 5.800 0 0 1 0-11.600z" fill="#5d41ae"/><circle cx="836.800" cy="26.700" r="5.800" fill="#4a86ad"/><path d="M825 32.500h6v5.800a5.800 5.800 0 1 1-6-5.800z" fill="#5b8f60"/></g>
<g transform="translate(874.100 13.500) scale(1.430)"><path d="m21.440 11.050-9.190 9.190a6 6 0 0 1-8.490-8.490l8.570-8.570A4 4 0 1 1 18 8.840l-8.590 8.570a2 2 0 0 1-2.830-2.830l8.490-8.480" stroke-width="1.540" stroke-linecap="round"/></g>
<path d="M934.300 19l25.200 12-25.200 12 4.800-12zM939.100 31h20" stroke-linejoin="round"/>
</svg>
<div class=t style="top:1826.9px;font-size:22.6px;color:#ccc;left:32.3px;">xAI: Grok Code Fast 1</div>
<svg style="left:0;top:1820px" width="1020" height="60" fill="none" stroke="#d0d0d0" stroke-width="2">
<path d="M906 15h22M917 12v22M908.500 38.500h17l-4-4.500h-9z" stroke-linejoin="round"/><path d="M904.500 25.500l4-9.500 4 9.500a4.200 4.200 0 0 1-8 0zM921.500 25.500l4-9.500 4 9.500a4.200 4.200 0 0 1-8 0z" stroke-linejoin="round" stroke-width="1.700"/>
<circle cx="962" cy="26.500" r="5.800"/><path d="M953.200 40a8.800 8.800 0 0 1 17.600 0M960 13h21v13h-6.500l-3 3v-3h-2" stroke-linejoin="round"/>
</svg>
<div class=a style="left:0;top:1884px;width:3356px;height:8px;background:#181818;border-top:2px solid #2b2b2b"></div>
</div>
</body></html>
